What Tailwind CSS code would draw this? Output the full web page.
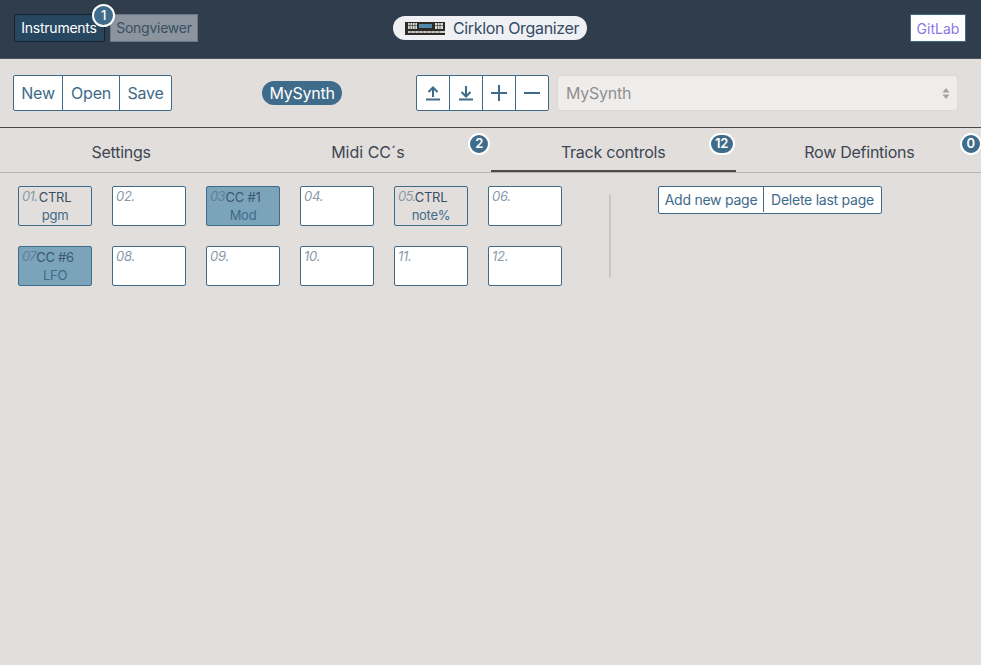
<!DOCTYPE html>
<html lang="en">

<head>
  <meta charset="UTF-8">
  <meta name="viewport" content="width=device-width, initial-scale=1.0">
  <title>Cirklon Organizer</title>
  <script src="https://cdn.jsdelivr.net/npm/@tailwindcss/browser@4"></script>
</head>

<body class="bg-[#e2dedb] h-screen overflow-hidden font-['Inter','Liberation_Sans',sans-serif] text-[#363636] tracking-[-0.25px]">

  <!-- Top navigation -->
  <nav class="h-[59px] bg-[#2f3d4c] border-b border-[#4a5560] flex items-start relative">
    <div class="flex pl-[14px] pt-[14px] gap-[5px]">
      <div class="relative">
        <a class="h-[28px] w-[91px] pb-[1px] pr-[1px] flex items-center justify-center rounded-[2px] bg-[#274760] border border-[#14212b] text-white text-[14px]">Instruments</a>
        <span class="absolute top-[-10px] left-[78px] w-[23px] h-[23px] rounded-full bg-[#3f6c8a] border-2 border-white text-white text-[13px] flex items-center justify-center font-medium">1</span>
      </div>
      <a class="h-[28px] w-[88px] pb-[1px] flex items-center justify-center bg-[#8c949e] border border-[#6c7885] text-[#3a5064] text-[14px]">Songviewer</a>
    </div>

    <div class="absolute left-[393px] top-[16px] w-[194px] h-[24px] rounded-full bg-[#eef0f4] flex items-center pl-[12px] gap-[8px]">
      <!-- synth logo -->
      <svg width="40" height="13" viewBox="0 0 40 13">
        <rect width="40" height="13" fill="#2e2a26" />
        <rect x="3" y="1" width="9" height="6" fill="#dcdcd8" />
        <rect x="30" y="1" width="8" height="6" fill="#dcdcd8" />
        <rect x="14" y="2" width="13" height="4" fill="#4f87ad" />
        <path d="M5 1v6M7.500 1v6M10 1v6M32.500 1v6M35 1v6M3 3.500h9M30 3.500h8" stroke="#2e2a26" stroke-width=".6" />
        <rect x="3" y="9" width="37" height="2" fill="#c9c8c4" />
        <path d="M6 9v2M10 9v2M14 9v2M18 9v2M22 9v2M26 9v2M30 9v2M34 9v2" stroke="#2e2a26" stroke-width=".5" />
      </svg>
      <span class="text-[#364a62] text-[16px] leading-none tracking-[-0.35px]">Cirklon Organizer</span>
    </div>

    <a class="absolute left-[910px] top-[14px] w-[56px] h-[28px] bg-white border border-[#3e6b89] text-[#8778e8] text-[14px] tracking-normal flex items-center justify-center">GitLab</a>
  </nav>

  <!-- Toolbar -->
  <div class="h-[69px] relative flex items-start pt-[16px] pl-[13px] border-b border-[#4a4a4a]">
    <div class="flex h-[36px] text-[16px] text-[#3e6b89] bg-white border border-[#3e6b89] rounded-[2px] w-[159px]">
      <button class="w-[49px] border-r border-[#3e6b89]">New</button>
      <button class="w-[57px] border-r border-[#3e6b89]">Open</button>
      <button class="flex-1">Save</button>
    </div>

    <span class="absolute left-[262px] top-[22px] h-[24px] w-[80px] rounded-full bg-[#3f6c8a] text-white text-[16px] flex items-center justify-center">MySynth</span>

    <div class="absolute left-[416px] top-[16px] flex h-[36px] w-[133px] bg-white border border-[#3e6b89] rounded-[2px]">
      <button class="w-[33px] border-r border-[#3e6b89] flex items-center justify-center">
        <svg width="16" height="16" viewBox="0 0 16 16" fill="none" stroke="#3e6b89" stroke-width="2"><path d="M1 14.500h14M8 12V2.500M3.500 7L8 2.500 12.500 7" /></svg>
      </button>
      <button class="w-[33px] border-r border-[#3e6b89] flex items-center justify-center">
        <svg width="16" height="16" viewBox="0 0 16 16" fill="none" stroke="#3e6b89" stroke-width="2"><path d="M1 14.500h14M8 1v10M3.500 7L8 11.500 12.500 7" /></svg>
      </button>
      <button class="w-[33px] border-r border-[#3e6b89] flex items-center justify-center">
        <svg width="16" height="16" viewBox="0 0 16 16" fill="none" stroke="#3e6b89" stroke-width="2"><path d="M0 8h16M8 0v16" /></svg>
      </button>
      <button class="flex-1 flex items-center justify-center">
        <svg width="16" height="16" viewBox="0 0 16 16" fill="none" stroke="#3e6b89" stroke-width="2"><path d="M0 8h16" /></svg>
      </button>
    </div>

    <div class="absolute left-[557px] top-[16px] w-[401px] h-[36px] bg-[#efedeb] border border-[#dbd8d6] rounded-[3px] flex items-center justify-between pl-[8px] pr-[7px] text-[16px] text-[#8f8f8f]">
      MySynth
      <svg width="8" height="11" viewBox="0 0 8 11" fill="#a3a3a3"><path d="M4 0l3.500 4.500h-7zM4 11L.5 6.500h7z" /></svg>
    </div>
  </div>

  <!-- Tabs -->
  <div class="h-[45px] grid grid-cols-4 border-b border-[#b9b5b5] text-[16px] text-[#3c4654]">
    <div class="relative flex items-center justify-center pt-[4px] pr-[3px]">Settings</div>
    <div class="relative flex items-center justify-center pt-[4px] tracking-normal">Midi CC´s
      <span class="absolute left-[223px] top-[5px] w-[22px] h-[22px] rounded-full bg-[#3f6c8a] border-2 border-white text-white text-[13px] font-semibold flex items-center justify-center">2</span>
    </div>
    <div class="relative flex items-center justify-center h-[44px] pt-[5px] border-b-2 border-[#4a4a4a]">Track controls
      <span class="absolute left-[218px] top-[5px] w-[26px] h-[22px] rounded-full bg-[#3f6c8a] border-2 border-white text-white text-[13px] font-semibold flex items-center justify-center">12</span>
    </div>
    <div class="relative flex items-center justify-center pt-[4px] pl-[2px]">Row Defintions
      <span class="absolute left-[224px] top-[5px] w-[22px] h-[22px] rounded-full bg-[#3f6c8a] border-2 border-white text-white text-[13px] font-semibold flex items-center justify-center">0</span>
    </div>
  </div>

  <!-- Track control pages -->
  <div class="flex pl-[18px] pt-[13px]">
    <div class="grid grid-cols-[repeat(6,74px)] auto-rows-[40px] gap-x-[20px] gap-y-[20px] w-[544px]">
      <div class="rounded-[2px] border border-[#3e6b89] bg-[#e2dedb] text-[13px] leading-[18px] text-center relative pt-[1px]">
        <i class="text-[#8a9aa8] absolute left-[3px] top-0 tracking-[-0.6px]">01.</i><span class="text-[#3a5064]">CTRL</span><br><span class="text-[#3e6b89]">pgm</span>
      </div>
      <div class="rounded-[2px] border border-[#3e6b89] bg-white text-[13px] leading-[18px] relative"><i class="text-[#8a9aa8] absolute left-[3px] top-0">02.</i></div>
      <div class="rounded-[2px] border border-[#3e6b89] bg-[#7ba3ba] text-[13px] leading-[18px] text-center relative pt-[1px]">
        <i class="text-[#5f8197] absolute left-[3px] top-0 tracking-[-0.6px]">03</i><span class="text-[#3a5870]">CC #1</span><br><span class="text-[#3e6b89]">Mod</span>
      </div>
      <div class="rounded-[2px] border border-[#3e6b89] bg-white text-[13px] leading-[18px] relative"><i class="text-[#8a9aa8] absolute left-[3px] top-0">04.</i></div>
      <div class="rounded-[2px] border border-[#3e6b89] bg-[#e2dedb] text-[13px] leading-[18px] text-center relative pt-[1px]">
        <i class="text-[#8a9aa8] absolute left-[3px] top-0 tracking-[-0.6px]">05.</i><span class="text-[#3a5064]">CTRL</span><br><span class="text-[#3e6b89]">note%</span>
      </div>
      <div class="rounded-[2px] border border-[#3e6b89] bg-white text-[13px] leading-[18px] relative"><i class="text-[#8a9aa8] absolute left-[3px] top-0">06.</i></div>
      <div class="rounded-[2px] border border-[#3e6b89] bg-[#7ba3ba] text-[13px] leading-[18px] text-center relative pt-[1px]">
        <i class="text-[#5f8197] absolute left-[3px] top-0 tracking-[-0.6px]">07</i><span class="text-[#3a5870]">CC #6</span><br><span class="text-[#3e6b89]">LFO</span>
      </div>
      <div class="rounded-[2px] border border-[#3e6b89] bg-white text-[13px] leading-[18px] relative"><i class="text-[#8a9aa8] absolute left-[3px] top-0">08.</i></div>
      <div class="rounded-[2px] border border-[#3e6b89] bg-white text-[13px] leading-[18px] relative"><i class="text-[#8a9aa8] absolute left-[3px] top-0">09.</i></div>
      <div class="rounded-[2px] border border-[#3e6b89] bg-white text-[13px] leading-[18px] relative"><i class="text-[#8a9aa8] absolute left-[3px] top-0">10.</i></div>
      <div class="rounded-[2px] border border-[#3e6b89] bg-white text-[13px] leading-[18px] relative"><i class="text-[#8a9aa8] absolute left-[3px] top-0">11.</i></div>
      <div class="rounded-[2px] border border-[#3e6b89] bg-white text-[13px] leading-[18px] relative"><i class="text-[#8a9aa8] absolute left-[3px] top-0">12.</i></div>
    </div>

    <div class="w-[2px] h-[84px] bg-[#cbc7c7] mt-[8px] ml-[47px]"></div>

    <div class="ml-[47px] flex h-[28px] w-[224px] pb-[1px] bg-white border border-[#3e6b89] rounded-[2px] text-[14px] text-[#3e6b89]">
      <button class="w-[105px] border-r border-[#3e6b89]">Add new page</button>
      <button class="flex-1">Delete last page</button>
    </div>
  </div>

</body>

</html>
